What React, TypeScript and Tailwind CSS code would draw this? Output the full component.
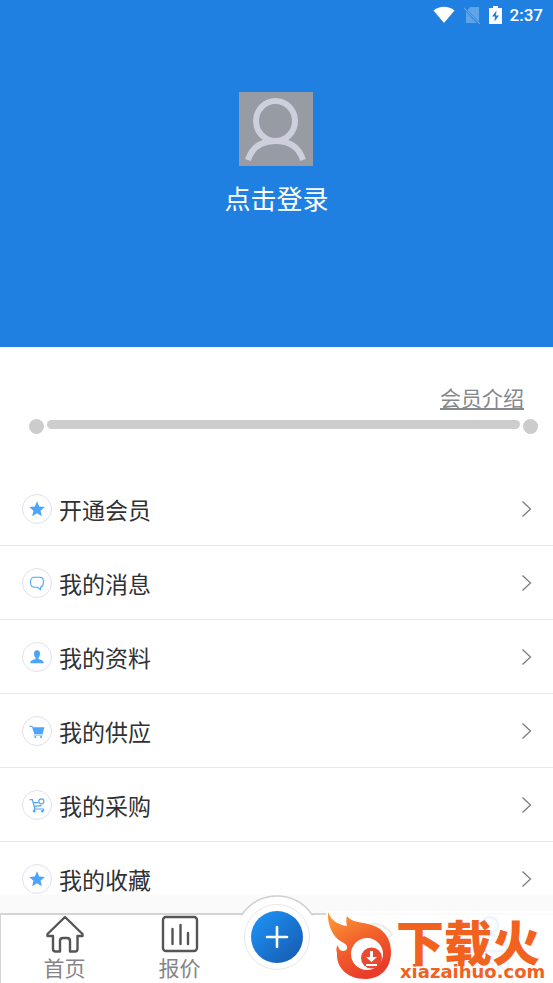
import type { ReactNode } from 'react';

const star = (
  <path d="M12 .5l3.300 7.900 8.400.7-6.400 5.500 2 8.400L12 18.500 4.700 23l2-8.400L.3 9.100l8.400-.7z" fill="#4aa5fb" />
);

const bubble = (
  <path
    d="M8 3.500h8c4 0 5.500 2 5.500 5.500v3c0 4-2 5.500-4 6L17 22l-4-3.500H8c-3.500 0-5.500-2.500-5.500-6V9c0-3.500 2-5.500 5.500-5.500z"
    fill="none"
    stroke="#4aa5fb"
    strokeWidth="1.600"
  />
);

const person = (
  <path
    d="M12 2c3.200 0 4.500 2.200 4.500 5s-1 4.500-2.300 6v2c3 1.200 8 1.800 8 6.500H1.800c0-4.700 5-5.300 8-6.500v-2C8.500 11.500 7.500 9.800 7.500 7S8.800 2 12 2z"
    fill="#4aa5fb"
  />
);

const cart = (
  <g fill="#4aa5fb">
    <path d="M1 4h4l1 2.500h17l-2.500 10H8L4.500 6H1z" />
    <path d="M7.500 17.500h13v1.200h-13z" />
    <circle cx="9.500" cy="21" r="1.600" />
    <circle cx="18" cy="21" r="1.600" />
  </g>
);

const cartPin = (
  <g fill="none" stroke="#4aa5fb" strokeWidth="1.800">
    <path d="M1 4h4l4 14h13M6.500 8.500H14M8 14l11-1" />
    <path d="M6 21.500l3-3.500M22 18v3" />
    <circle cx="18.500" cy="6.500" r="3.800" />
    <circle cx="8" cy="21.500" r="1" />
    <circle cx="20" cy="21.500" r="1" />
  </g>
);

const items: { label: string; icon: ReactNode }[] = [
  { label: '开通会员', icon: star },
  { label: '我的消息', icon: bubble },
  { label: '我的资料', icon: person },
  { label: '我的供应', icon: cart },
  { label: '我的采购', icon: cartPin },
  { label: '我的收藏', icon: star },
];

function StatusBar() {
  return (
    <div className="flex h-[30px] items-center justify-end pr-2.5 text-white">
      <svg className="mr-2 h-[18px] w-[22px]" viewBox="0 0 22 18" aria-hidden="true">
        <path d="M0.500 4.500C6.500-.5 15.500-.5 21.500 4.500L11 17z" fill="currentColor" />
      </svg>
      <svg className="mr-2 h-[18px] w-[18px]" viewBox="0 0 18 18" aria-hidden="true">
        <path d="M7 1h9v14.500L4.500 4zM3 5.500L13.500 17H3z" fill="#5ea4e9" />
        <path d="M1 2l16 16" stroke="#5ea4e9" strokeWidth="1.300" />
      </svg>
      <svg className="mr-2 h-[18px] w-[13px]" viewBox="0 0 13 18" aria-hidden="true">
        <path d="M4 0h5v2h4v16H0V2h4z" fill="currentColor" />
        <path d="M7.500 4.500L3 10.500h3l-.5 5 4.500-6H7z" fill="#1f80e2" />
      </svg>
      <span className="font-[Roboto,sans-serif] text-[17px] leading-[30px] font-medium">2:37</span>
    </div>
  );
}

function Profile() {
  return (
    <header className="h-[347px] bg-[#1f80e2]">
      <StatusBar />
      <button type="button" className="mx-auto mt-[62px] flex flex-col items-center text-white">
        <svg className="h-[74px] w-[74px] bg-[#979ba4]" viewBox="0 0 74 74" aria-hidden="true">
          <g fill="none" stroke="#cdd0dc" strokeWidth="6">
            <ellipse cx="36.500" cy="29" rx="19.500" ry="20" />
            <path d="M9 68c4-13 14-19 27.500-19S60 55 64 68" />
          </g>
        </svg>
        <span className="mt-3 text-[26px] leading-10">点击登录</span>
      </button>
    </header>
  );
}

function Membership() {
  return (
    <section className="h-[125px] pt-[34px]">
      <div className="flex justify-end pr-[29px]">
        <a href="#intro" className="text-[21px] leading-8 text-[#85888c] underline underline-offset-2">
          会员介绍
        </a>
      </div>
      <div className="mr-[15px] ml-[29px] flex h-[26px] items-center justify-between gap-[3px]">
        <span className="size-[15px] rounded-full bg-[#cccccc]" />
        <span className="mb-1 h-[9px] flex-1 rounded-full bg-[#cdcdcd]" />
        <span className="size-[15px] rounded-full bg-[#cccccc]" />
      </div>
    </section>
  );
}

function Menu() {
  return (
    <ul>
      {items.map((item) => (
        <li key={item.label} className="border-b border-[#e9e9eb]">
          <a href="#menu" className="flex h-[73px] items-center pr-[21px] pl-[22px]">
            <span className="flex size-[30px] items-center justify-center rounded-full border border-[#e0e1ee]">
              <svg className="size-4" viewBox="0 0 24 24" aria-hidden="true">
                {item.icon}
              </svg>
            </span>
            <span className="ml-[7px] flex-1 text-[23px] leading-8 text-[#303133]">{item.label}</span>
            <svg className="h-[18px] w-[11px]" viewBox="0 0 11 18" aria-hidden="true">
              <path d="M1.500 1.500l8 7.500-8 7.500" fill="none" stroke="#77797c" strokeWidth="1.200" />
            </svg>
          </a>
        </li>
      ))}
    </ul>
  );
}

function TabItem({ label, children }: { label: string; children: ReactNode }) {
  return (
    <a href="#tab" className="flex flex-col items-center text-[21px] leading-7 text-[#858585]">
      <svg className="h-[38px] w-[38px]" viewBox="0 0 38 38" fill="none" stroke="#555555" strokeWidth="2.400" aria-hidden="true">
        {children}
      </svg>
      {label}
    </a>
  );
}

function Watermark() {
  return (
    <div className="absolute right-0 bottom-0 flex h-[72px] w-[227px] bg-white/90">
      <svg className="h-[72px] w-[66px] shrink-0" viewBox="0 0 66 72" aria-hidden="true">
        <defs>
          <linearGradient id="flame" x1="0" y1="0" x2="0.500" y2="1">
            <stop offset="0" stopColor="#fba038" />
            <stop offset="0.500" stopColor="#f3652c" />
            <stop offset="1" stopColor="#e93c2a" />
          </linearGradient>
        </defs>
        <path
          d="M2 1C5 9 12 14 21 15C20 11 20 8 21 5C25 11 34 11 42 13C56 16 65 26 65 41C65 58 54 68 39 68C22 68 10 57 11 42C10 39 10 36 12 34C12 38 16 42 20 39C23 36 20 33 16 31C6 26 1 12 2 1Z"
          fill="url(#flame)"
        />
        <circle cx="41" cy="43" r="16" fill="#ffffff" />
        <circle cx="45.500" cy="47" r="10.500" fill="#e94b31" />
        <path d="M44 40h3v6h4l-5.500 5-5.500-5h4zM40 53h11v2H40z" fill="#ffffff" />
      </svg>
      <div className="flex flex-1 flex-col items-start justify-end pb-0.5 whitespace-nowrap text-[#f2621f]">
        <span className="ml-1 text-5xl leading-[46px] font-black">下载火</span>
        <span className="ml-2 font-['DejaVu_Sans',sans-serif] text-lg leading-[18px] font-bold">xiazaihuo.com</span>
      </div>
    </div>
  );
}

function TabBar() {
  return (
    <nav className="fixed inset-x-0 bottom-0 h-[88px] bg-[#fafafa] pt-[18px]">
      <div className="grid h-[70px] grid-cols-[1fr_1fr_80px_1fr_1fr] border-t-2 border-l border-[#d4d4d4] bg-white px-1.5">
        <TabItem label="首页">
          <path
            d="M19 2L1.500 19v2H7v13q0 2.500 2.500 2.500H14V26q0-3 3-3h4q3 0 3 3v10.500h5q2.500 0 2.500-2.500V21h5v-2z"
            strokeLinejoin="round"
          />
        </TabItem>
        <TabItem label="报价">
          <rect x="2" y="2" width="34" height="34" rx="3" />
          <path d="M11.500 14v15M19.500 10v19M27 18v11" strokeLinecap="round" />
        </TabItem>
        <div className="relative">
          <svg className="absolute -top-[20px] left-1 h-[22px] w-[72px]" viewBox="0 0 72 22" aria-hidden="true">
            <path d="M0 20L1 19.500C10 7 22 1 36 1S62 7 71 19.500L72 22H0z" fill="#ffffff" />
            <path d="M0 20L1 19.500C10 7 22 1 36 1S62 7 71 19.500L72 20" fill="none" stroke="#cfcfcf" strokeWidth="1.500" />
          </svg>
          <button
            type="button"
            aria-label="发布"
            className="absolute -top-[11px] left-[7px] flex size-[66px] items-center justify-center rounded-full border border-[#e8e8e8] bg-white"
          >
            <span className="flex size-[52px] items-center justify-center rounded-full bg-linear-to-br from-[#1c98fb] to-[#1757ac]">
              <svg className="size-6" viewBox="0 0 24 24" aria-hidden="true">
                <path d="M12 2v20M2 12h20" stroke="#ffffff" strokeWidth="2.600" strokeLinecap="round" />
              </svg>
            </span>
          </button>
        </div>
        <TabItem label="">
          <path d="M2 19q17-20 34 0q-17 20-34 0z" />
          <circle cx="19" cy="19" r="7" />
        </TabItem>
        <a href="#mine" className="flex flex-col items-center text-[21px] leading-7 text-[#3c97ee]">
          <svg className="h-[38px] w-[38px]" viewBox="0 0 38 38" fill="none" stroke="#3c97ee" strokeWidth="2.400" aria-hidden="true">
            <circle cx="19" cy="10" r="8" />
            <path d="M2 36c0-10 7-16 17-16s17 6 17 16z" />
          </svg>
          我的
        </a>
      </div>
      <Watermark />
    </nav>
  );
}

export default function App() {
  return (
    <main className="min-h-screen bg-white font-['Noto_Sans_CJK_SC',sans-serif]">
      <Profile />
      <Membership />
      <Menu />
      <TabBar />
    </main>
  );
}
